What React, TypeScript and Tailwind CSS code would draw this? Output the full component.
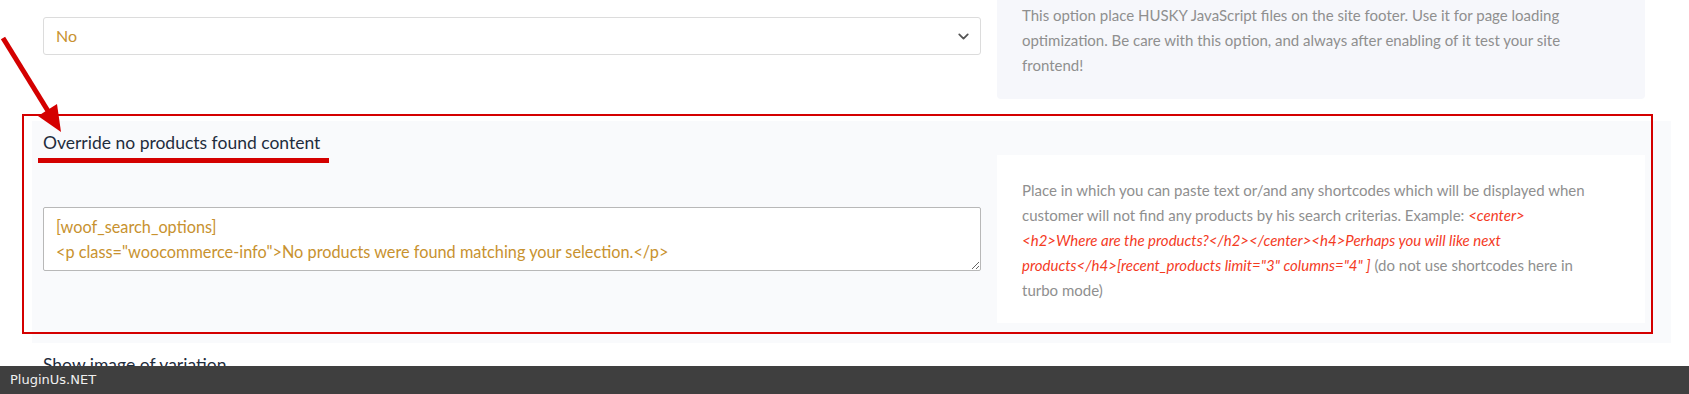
import React from "react";
import { ChevronDown } from "lucide-react";

export default function App() {
  return (
    <div className="relative w-full h-[394px] overflow-hidden bg-white font-['Lato',sans-serif]">
      {/* Row 1 */}
      <div className="flex gap-[16px] pl-[43px]">
        <div className="w-[938px] pt-[17px]">
          <div className="h-[38px] border border-[#dcdcdc] rounded-[3px] bg-white flex items-center justify-between pl-[12px] pr-[8px]">
            <span className="text-[16px] text-[#c8922f]">No</span>
            <ChevronDown size={17} strokeWidth={2.5} className="text-[#555]" />
          </div>
        </div>
        <div className="w-[648px] h-[99px] bg-[#f6f7fb] rounded-b-[4px] pt-[3px] px-[25px] text-[15px] leading-[25px] text-[#8f8f8f]">
          This option place HUSKY JavaScript files on the site footer. Use it for page loading optimization. Be care with this option, and always after enabling of it test your site frontend!
        </div>
      </div>

      {/* Row 2 */}
      <div className="relative mt-[22px] ml-[32px] w-[1639px] bg-[#f9fafc] pt-[10px] pb-[20px]">
        <div className="pl-[11px] text-[17.5px] leading-[24px] text-[#1f2d3d]">
          Override no products found content
        </div>
        <div className="flex items-center gap-[16px] pl-[11px]">
          <textarea
            readOnly
            className="w-[938px] h-[64px] border border-[#b8b8b8] rounded-[2px] bg-white px-[12px] pt-[6px] text-[16.3px] leading-[25px] text-[#c8922f] outline-none resize-y"
            defaultValue={'[woof_search_options]\n<p class="woocommerce-info">No products were found matching your selection.</p>'}
          />
          <div className="w-[648px] h-[168px] bg-white pt-[23px] px-[25px] text-[15px] leading-[25px] text-[#8f8f8f]">
            Place in which you can paste text or/and any shortcodes which will be displayed when customer will not find any products by his search criterias. Example:{" "}
            <em className="text-[#f43b1f]">
              &lt;center&gt;
              <br />
              &lt;h2&gt;Where are the products?&lt;/h2&gt;&lt;/center&gt;&lt;h4&gt;Perhaps you will like next
              <br />
              products&lt;/h4&gt;[recent_products limit="3" columns="4" ]
            </em>{" "}
            (do not use shortcodes here in
            <br />
            turbo mode)
          </div>
        </div>
        <div className="absolute left-[-10px] top-[-7px] w-[1631px] h-[220px] border-2 border-[#d40000] pointer-events-none" />
      </div>

      {/* Row 3 */}
      <div className="pl-[43px] pt-[10px] text-[17.5px] leading-[24px] text-[#1f2d3d]">
        Show image of variation
      </div>

      {/* Annotations */}
      <svg className="absolute inset-0 w-full h-full pointer-events-none" viewBox="0 0 1689 394">
        <line x1="3" y1="38" x2="48" y2="111" stroke="#d40000" strokeWidth="5" />
        <polygon points="61,132 38,116 57,104" fill="#d40000" />
        <rect x="38" y="158" width="291" height="5" fill="#d40000" />
      </svg>

      {/* Footer */}
      <div className="absolute left-0 right-0 bottom-0 h-[28px] bg-[#3f3f3f] pl-[10px] flex items-center">
        <span className="text-[13px] text-[#f0f0f0] font-['DejaVu_Sans',sans-serif]">PluginUs.NET</span>
      </div>
    </div>
  );
}
